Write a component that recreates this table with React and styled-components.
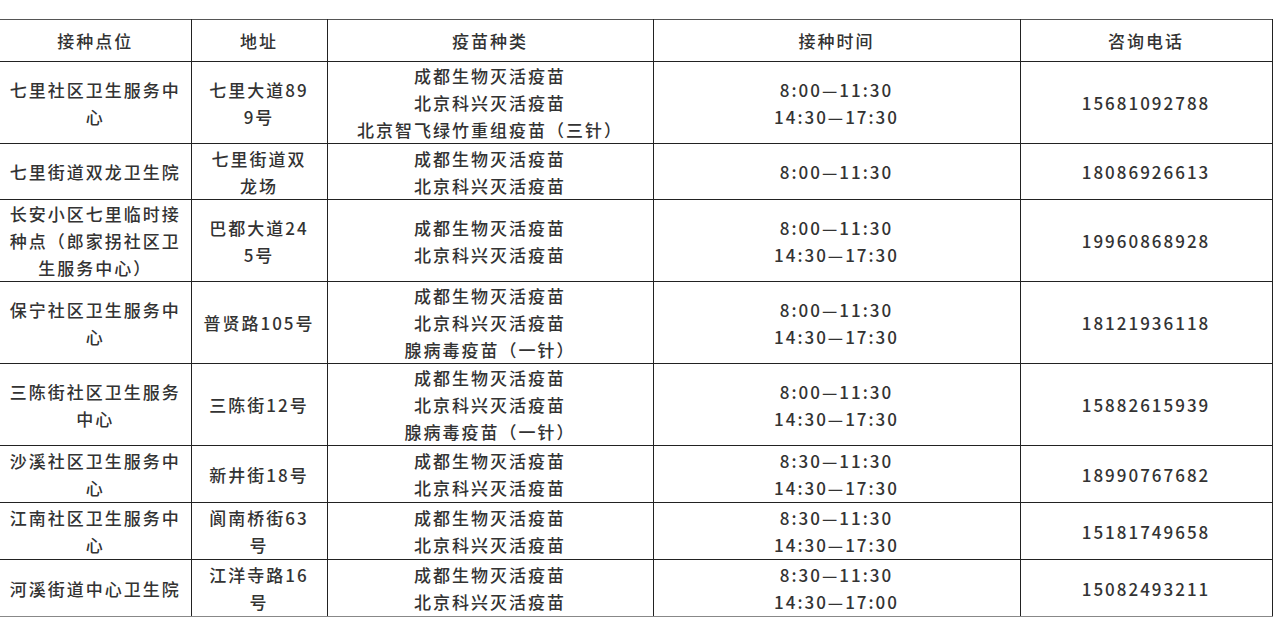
import React from "react";
import styled, { createGlobalStyle } from "styled-components";

const Global = createGlobalStyle`
  html, body { margin: 0; padding: 0; background: #fff; }
  body { font-family: "Noto Sans CJK SC", "Noto Sans", sans-serif; color: #333; }
`;

const Page = styled.div`
  padding-top: 19px;
  width: 1280px;
`;

const Table = styled.table`
  border-collapse: collapse;
  table-layout: fixed;
  width: 1272px;
  border-top: 1px solid #555;
  border-right: 1px solid #555;
`;

const Row = styled.tr`
  height: ${(p) => p.$h}px;
  &:last-child td { border-bottom: 1px solid #888; }
`;

const HeadCell = styled.th`
  border: 1px solid #222;
  border-top: none;
  &:first-child { border-left: none; }
  font-weight: 500;
  font-size: 17px;
  letter-spacing: 2px;
  line-height: 27px;
  padding: 0 2px;
  text-align: center;
  vertical-align: middle;
  color: #333;
`;

const Cell = styled.td`
  border: 1px solid #222;
  &:first-child { border-left: none; }
  font-weight: 500;
  font-size: 17px;
  letter-spacing: 2px;
  line-height: 27px;
  padding: 0 1px;
  text-align: center;
  vertical-align: middle;
  color: #333;
`;

const Line = styled.div`
  white-space: nowrap;
`;

const cols = [191, 136, 326, 367, 252];
const heads = ["接种点位", "地址", "疫苗种类", "接种时间", "咨询电话"];

const A = "成都生物灭活疫苗";
const B = "北京科兴灭活疫苗";
const T1 = "8:00—11:30";
const T2 = "14:30—17:30";
const T3 = "8:30—11:30";

const rows = [
  { h: 82, name: ["七里社区卫生服务中", "心"], addr: ["七里大道89", "9号"], v: [A, B, "北京智飞绿竹重组疫苗（三针）"], t: [T1, T2], tel: "15681092788" },
  { h: 56, name: ["七里街道双龙卫生院"], addr: ["七里街道双", "龙场"], v: [A, B], t: [T1], tel: "18086926613" },
  { h: 82, name: ["长安小区七里临时接", "种点（郎家拐社区卫", "生服务中心）"], addr: ["巴都大道24", "5号"], v: [A, B], t: [T1, T2], tel: "19960868928" },
  { h: 82, name: ["保宁社区卫生服务中", "心"], addr: ["普贤路105号"], v: [A, B, "腺病毒疫苗（一针）"], t: [T1, T2], tel: "18121936118" },
  { h: 81, name: ["三陈街社区卫生服务", "中心"], addr: ["三陈街12号"], v: [A, B, "腺病毒疫苗（一针）"], t: [T1, T2], tel: "15882615939" },
  { h: 57, name: ["沙溪社区卫生服务中", "心"], addr: ["新井街18号"], v: [A, B], t: [T3, T2], tel: "18990767682" },
  { h: 57, name: ["江南社区卫生服务中", "心"], addr: ["阆南桥街63", "号"], v: [A, B], t: [T3, T2], tel: "15181749658" },
  { h: 57, name: ["河溪街道中心卫生院"], addr: ["江洋寺路16", "号"], v: [A, B], t: [T3, "14:30—17:00"], tel: "15082493211" },
];

const Lines = ({ items }) => items.map((x, j) => <Line key={j}>{x}</Line>);

export default function App() {
  return (
    <Page>
      <Global />
      <Table>
        <colgroup>
          {cols.map((w, i) => (
            <col key={i} style={{ width: w }} />
          ))}
        </colgroup>
        <thead>
          <Row $h={42}>
            {heads.map((h) => (
              <HeadCell key={h}>{h}</HeadCell>
            ))}
          </Row>
        </thead>
        <tbody>
          {rows.map((r, i) => (
            <Row key={i} $h={r.h}>
              <Cell><Lines items={r.name} /></Cell>
              <Cell><Lines items={r.addr} /></Cell>
              <Cell><Lines items={r.v} /></Cell>
              <Cell><Lines items={r.t} /></Cell>
              <Cell>{r.tel}</Cell>
            </Row>
          ))}
        </tbody>
      </Table>
    </Page>
  );
}
